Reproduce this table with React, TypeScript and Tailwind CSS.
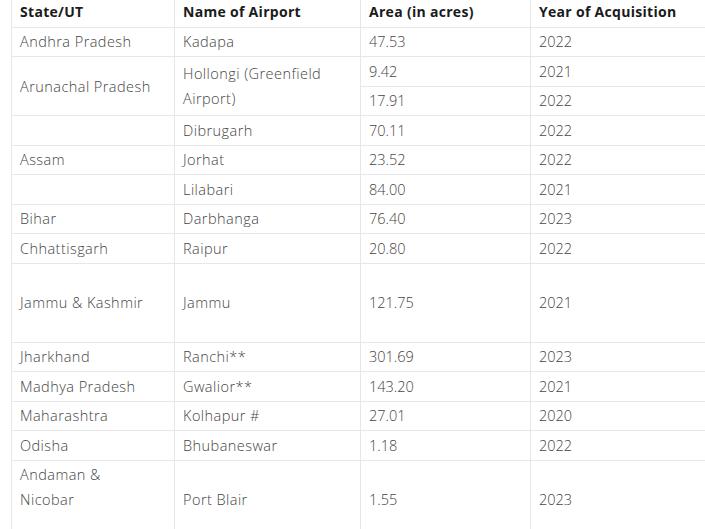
import React from 'react'

type Row = {
  state?: string
  stateSpan?: number
  airport?: string
  airportSpan?: number
  area: string
  year: string
  tall?: boolean
}

const rows: Row[] = [
  { state: 'Andhra Pradesh', airport: 'Kadapa', area: '47.53', year: '2022' },
  { state: 'Arunachal Pradesh', stateSpan: 2, airport: 'Hollongi (Greenfield Airport)', airportSpan: 2, area: '9.42', year: '2021' },
  { area: '17.91', year: '2022' },
  { state: '', airport: 'Dibrugarh', area: '70.11', year: '2022' },
  { state: 'Assam', airport: 'Jorhat', area: '23.52', year: '2022' },
  { state: '', airport: 'Lilabari', area: '84.00', year: '2021' },
  { state: 'Bihar', airport: 'Darbhanga', area: '76.40', year: '2023' },
  { state: 'Chhattisgarh', airport: 'Raipur', area: '20.80', year: '2022' },
  { state: 'Jammu & Kashmir', airport: 'Jammu', area: '121.75', year: '2021', tall: true },
  { state: 'Jharkhand', airport: 'Ranchi**', area: '301.69', year: '2023' },
  { state: 'Madhya Pradesh', airport: 'Gwalior**', area: '143.20', year: '2021' },
  { state: 'Maharashtra', airport: 'Kolhapur #', area: '27.01', year: '2020' },
  { state: 'Odisha', airport: 'Bhubaneswar', area: '1.18', year: '2022' },
]

const td = 'border border-[#e7e7e7] px-2 align-middle leading-[25px]'
const num = td + ' tracking-normal'

const App = () => {
  return (
    <div className="w-[705px] h-[529px] overflow-hidden bg-white font-['Open_Sans',sans-serif] text-[14px]">
      <table className="table-fixed border-collapse ml-[11px] mt-[-3px] w-[720px] border-t-0">
        <colgroup>
          <col className="w-[163px]" />
          <col className="w-[186px]" />
          <col className="w-[170px]" />
          <col className="w-[201px]" />
        </colgroup>
        <thead>
          <tr className="h-[30px] text-[#1b1b1b] font-semibold text-left tracking-[0.3px]">
            <th className="border-x border-b border-[#e7e7e7] px-2">State/UT</th>
            <th className="border-x border-b border-[#e7e7e7] px-2">Name of Airport</th>
            <th className="border-x border-b border-[#e7e7e7] px-2">Area (in acres)</th>
            <th className="border-x border-b border-[#e7e7e7] px-2">Year of Acquisition</th>
          </tr>
        </thead>
        <tbody className="text-[#444] font-light text-[14.5px] tracking-[0.45px]">
          {rows.map((r, i) => (
            <tr key={i} className={r.tall ? 'h-[79px]' : 'h-[29.5px]'}>
              {r.state !== undefined && (
                <td className={td} rowSpan={r.stateSpan}>{r.state}</td>
              )}
              {r.airport !== undefined && (
                <td className={td} rowSpan={r.airportSpan}>{r.airport}</td>
              )}
              <td className={num}>{r.area}</td>
              <td className={num}>{r.year}</td>
            </tr>
          ))}
          <tr className="h-[79px]">
            <td className={td + ' !align-top pt-[1px]'}>
              Andaman &amp;<br />Nicobar
            </td>
            <td className={td}>Port Blair</td>
            <td className={num}>1.55</td>
            <td className={num}>2023</td>
          </tr>
        </tbody>
      </table>
    </div>
  )
}

export default App
